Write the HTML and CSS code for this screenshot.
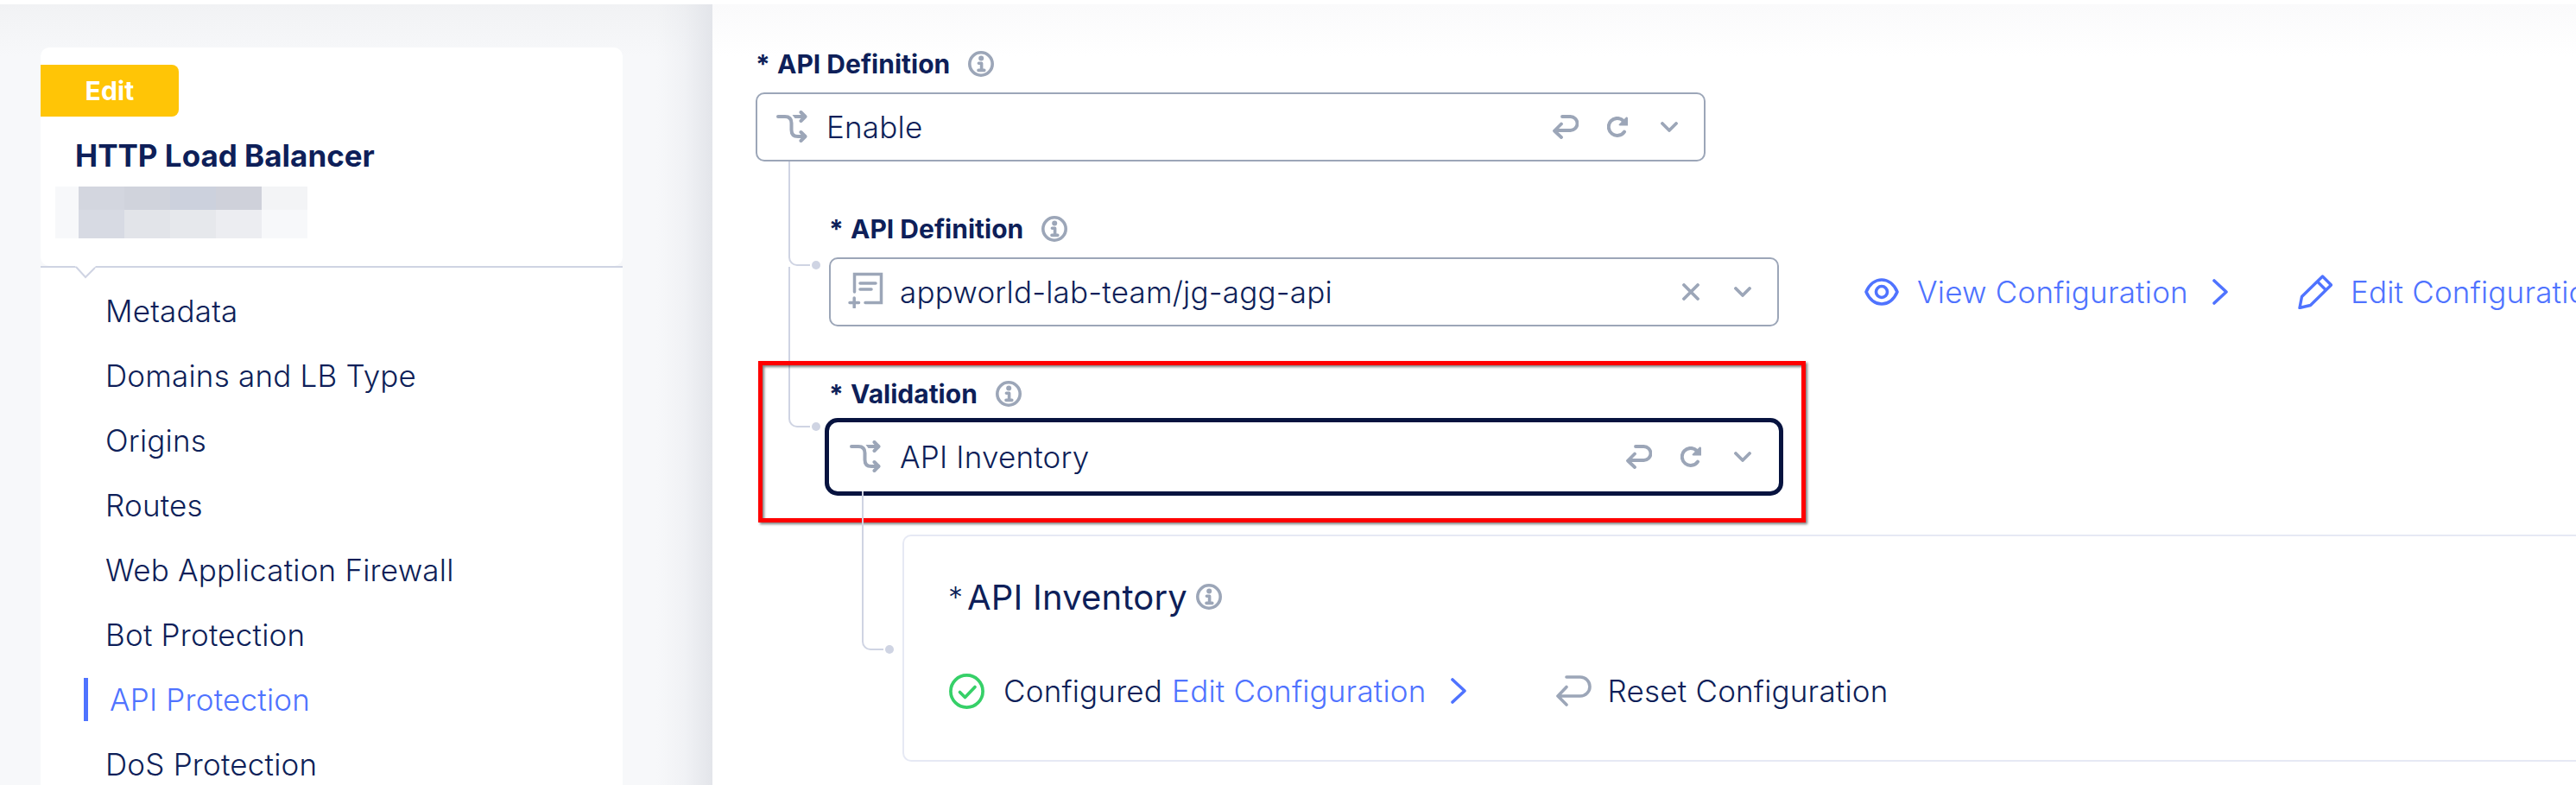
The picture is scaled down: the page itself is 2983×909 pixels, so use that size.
FILE: index.html
```html
<!DOCTYPE html>
<html lang="en">
<head>
<meta charset="utf-8">
<title>HTTP Load Balancer</title>
<link rel="stylesheet" href="styles.css">
</head>
<body>
<svg class="defs" width="0" height="0" aria-hidden="true">
  <symbol id="info" viewBox="0 0 30 30"><circle cx="15" cy="15" r="13.2" fill="none" stroke="currentColor" stroke-width="3.600"/><circle cx="15.2" cy="8.6" r="3" fill="currentColor"/><path d="M12.4 14.200h3.2v8M12 22.400h6.800" fill="none" stroke="currentColor" stroke-width="3.600" stroke-linecap="round" stroke-linejoin="round"/></symbol>
  <symbol id="split" viewBox="0 0 36 38"><g fill="none" stroke="currentColor" stroke-width="4" stroke-linecap="round" stroke-linejoin="round"><path d="M2 7h8c5 0 7.500 2.500 7.500 7.500v8c0 5 2.500 7.500 7.500 7.500h8"/><path d="M28.500 2L33.500 7l-5 5M28.500 25l5 5-5 5"/></g><path d="M18.500 5H33v4H21.500z" fill="currentColor"/></symbol>
  <symbol id="form" viewBox="0 0 42 42"><g fill="none" stroke="currentColor" stroke-width="3.500" stroke-linecap="round"><path d="M7.500 23V2.500h31v33H20" stroke-linejoin="miter"/><path d="M14 13h18M14 20h13"/><path d="M2 35.500h10.500M7.200 30v11"/></g></symbol>
  <symbol id="reset" viewBox="0 0 30 28"><path d="M11 2h9.500a7.900 7.900 0 0 1 0 16H3M10 10.500L2 18.500 10 26" fill="none" stroke="currentColor" stroke-width="3.800" stroke-linecap="round" stroke-linejoin="round"/></symbol>
  <symbol id="reset-lg" viewBox="0 0 41 36"><path d="M12 2h16a11 11 0 0 1 0 22H3M12 13.500L2 24l10 10" fill="none" stroke="currentColor" stroke-width="3.600" stroke-linecap="round" stroke-linejoin="round"/></symbol>
  <symbol id="refresh" viewBox="0 0 24 24"><path d="M20 17.600A10 10 0 1 1 19 5" fill="none" stroke="currentColor" stroke-width="4" stroke-linecap="round"/><path d="M22.200 .6Q24 0 24 2v8.500H15Q12.600 10 14.200 8.400z" fill="currentColor"/></symbol>
  <symbol id="chev" viewBox="0 0 20 12"><path d="M2 2l8 8 8-8" fill="none" stroke="currentColor" stroke-width="3.800" stroke-linecap="round" stroke-linejoin="round"/></symbol>
  <symbol id="close" viewBox="0 0 20 20"><path d="M2 2l16 16M18 2L2 18" fill="none" stroke="currentColor" stroke-width="3.800" stroke-linecap="round"/></symbol>
  <symbol id="next" viewBox="0 0 18 30"><path d="M2 2l14 13L2 28" fill="none" stroke="currentColor" stroke-width="3.600" stroke-linecap="round" stroke-linejoin="round"/></symbol>
  <symbol id="eye" viewBox="0 0 40 32"><path d="M2 16C10 -2.600 30 -2.600 38 16C30 34.600 10 34.600 2 16z" fill="none" stroke="currentColor" stroke-width="3.600" stroke-linejoin="round"/><circle cx="20" cy="16" r="6.500" fill="none" stroke="currentColor" stroke-width="3.600"/></symbol>
  <symbol id="pencil" viewBox="0 0 40 40"><g fill="none" stroke="currentColor" stroke-width="3.400" stroke-linejoin="round"><path d="M4.500 25.500L28.500 2 38.500 12 14.500 35.500 2 38.500z"/><path d="M23 8.500L32.500 18"/></g></symbol>
  <symbol id="check" viewBox="0 0 41 41"><g fill="none" stroke="currentColor" stroke-width="3.700" stroke-linecap="round" stroke-linejoin="round"><circle cx="20.500" cy="20.500" r="18.600"/><path d="M12.500 21.500l6 6L30 15.500"/></g></symbol>
</svg>
<aside class="sidebar">
  <section class="card head">
    <span class="badge">Edit</span>
    <h1 class="title">HTTP Load Balancer</h1>
    <div class="redacted"><i></i><i></i><i></i><i></i><i></i><i></i><i></i><i></i><i></i><i></i><i></i><i></i></div>
    <svg class="notch" viewBox="0 0 24 16"><path d="M0 0h24L12 13z" fill="#fff"/><path d="M1 1l11 12L23 2" fill="none" stroke="#cfd4e3" stroke-width="2"/></svg>
  </section>
  <nav class="card menu">
    <a>Metadata</a>
    <a>Domains and LB Type</a>
    <a>Origins</a>
    <a>Routes</a>
    <a>Web Application Firewall</a>
    <a>Bot Protection</a>
    <a class="active">API Protection</a>
    <a>DoS Protection</a>
  </nav>
</aside>
<main class="main">
  <div class="field">
    <div class="label"><span class="star">*</span><span>API Definition</span><svg class="info"><use href="#info"/></svg></div>
    <div class="select"><svg class="kind"><use href="#split"/></svg><span class="value">Enable</span><svg class="i-reset"><use href="#reset"/></svg><svg class="i-refresh"><use href="#refresh"/></svg><svg class="i-chev"><use href="#chev"/></svg></div>
  </div>
  <div class="children">
    <div class="field">
      <span class="branch first"></span>
      <div class="label"><span class="star">*</span><span>API Definition</span><svg class="info"><use href="#info"/></svg></div>
      <div class="row">
        <div class="select"><svg class="form"><use href="#form"/></svg><span class="value">appworld-lab-team/jg-agg-api</span><svg class="i-close"><use href="#close"/></svg><svg class="i-chev"><use href="#chev"/></svg></div>
        <a class="link view"><svg class="i-eye"><use href="#eye"/></svg><span>View Configuration</span><svg class="i-next"><use href="#next"/></svg></a>
        <a class="link edit"><svg class="i-pencil"><use href="#pencil"/></svg><span>Edit Configuration</span></a>
      </div>
    </div>
    <div class="field">
      <span class="branch second"></span>
      <span class="highlight"></span>
      <div class="label"><span class="star">*</span><span>Validation</span><svg class="info"><use href="#info"/></svg></div>
      <div class="select focused"><svg class="kind"><use href="#split"/></svg><span class="value">API Inventory</span><svg class="i-reset"><use href="#reset"/></svg><svg class="i-refresh"><use href="#refresh"/></svg><svg class="i-chev"><use href="#chev"/></svg></div>
    </div>
    <div class="panel">
      <span class="branch third"></span>
      <div class="panel-title"><span class="star">*</span><span>API Inventory</span><svg class="info"><use href="#info"/></svg></div>
      <div class="panel-row">
        <svg class="i-check"><use href="#check"/></svg><span class="state">Configured</span><a class="link"><span>Edit Configuration</span><svg class="i-next"><use href="#next"/></svg></a>
        <svg class="i-reset-lg"><use href="#reset-lg"/></svg><span class="reset">Reset Configuration</span>
      </div>
    </div>
  </div>
</main>
</body>
</html>
```
FILE: styles.css
```css
* { box-sizing: border-box; }
body {
  margin: 0;
  height: 909px;
  display: flex;
  overflow: hidden;
  background: #fff;
  border-top: 5px solid #fff;
  font-family: Inter, "Liberation Sans", sans-serif;
  font-size: 35px;
  font-weight: 340;
  letter-spacing: .2px;
  color: #0e1f59;
  white-space: nowrap;
}
svg { flex: none; display: block; }
.defs { position: absolute; }

/* Sidebar */
.sidebar {
  flex: none;
  width: 825px;
  height: 904px;
  padding: 50px 104px 0 47px;
  background:
    linear-gradient(to right, rgba(225,227,233,0) 0, rgba(226,228,234,.3) 50%, #e3e5ea 100%) right / 65px 100% no-repeat,
    linear-gradient(#f1f2f4, #f7f8fa 60px);
}
.card { background: #fff; border-radius: 10px; }
.head {
  position: relative;
  height: 253px;
  padding-top: 20px;
}
.badge {
  display: block;
  width: 160px;
  height: 60px;
  line-height: 60px;
  text-align: center;
  border-radius: 0 8px 8px 0;
  background: #ffc506;
  color: #fff;
  font-size: 30px;
  font-weight: 650;
}
.title {
  margin: 23px 0 0 40px;
  font-size: 35px;
  line-height: 44px;
  font-weight: 650;
  letter-spacing: 0;
}
.redacted {
  width: 292px;
  margin: 14px 0 0 17px;
  display: grid;
  grid-template-columns: 27px repeat(5, 53px);
  grid-template-rows: 27px 33px;
}
.redacted i { background: #f7f8fa; }
.redacted i:nth-child(2) { background: #d3d6df; }
.redacted i:nth-child(3) { background: #d0d3dc; }
.redacted i:nth-child(4) { background: #ccd1dd; }
.redacted i:nth-child(5) { background: #cfd1da; }
.redacted i:nth-child(6) { background: #f3f4f6; }
.redacted i:nth-child(8) { background: #d7dae3; }
.redacted i:nth-child(9) { background: #e2e4e9; }
.redacted i:nth-child(10) { background: #e6e8ec; }
.redacted i:nth-child(11) { background: #ecedf1; }
.notch {
  position: absolute;
  z-index: 1;
  left: 40px;
  top: 253px;
  width: 24px;
  height: 16px;
}
.menu {
  height: 610px;
  padding-top: 12px;
  border-radius: 0;
  border-top: 2px solid #cfd4e3;
}
.menu a {
  display: flex;
  align-items: center;
  height: 75px;
  padding-left: 75px;
}
.menu .active { color: #4f73ff; padding-left: 50px; }
.menu .active::before {
  content: "";
  width: 5px;
  height: 50px;
  margin-right: 25px;
  background: #4f73ff;
}

/* Form */
.main {
  flex: 1;
  min-width: 0;
  height: 904px;
  padding: 51px 0 0 50px;
  background: linear-gradient(#fafafb, #fff 60px);
}
.field { position: relative; }
.label {
  display: flex;
  align-items: center;
  height: 36px;
  margin-bottom: 15px;
  font-size: 30px;
  font-weight: 650;
  letter-spacing: 0;
}
.label .star { width: 25px; }
.info { width: 30px; height: 30px; color: #9ca6b8; }
.label .info { margin-left: 21px; }
.select {
  display: flex;
  flex: none;
  align-items: center;
  width: 1100px;
  height: 80px;
  padding: 0 30px 0 22px;
  border: 2px solid #9ca6b8;
  border-radius: 10px;
  background: #fff;
}
.select svg { color: #9ca6b8; }
.focused { border-color: #fff; box-shadow: 0 0 0 5px #07133f; }
.kind { width: 36px; height: 38px; margin-right: 22px; }
.form { width: 42px; height: 42px; margin: -4px 18px 0 -2px; }
.value { flex: 1; }
.i-reset { width: 30px; height: 28px; margin-right: 33px; }
.i-refresh { width: 24px; height: 24px; margin-right: 38px; }
.i-close { width: 20px; height: 20px; margin-right: 40px; }
.i-chev { width: 20px; height: 12px; }
.children {
  display: flex;
  flex-direction: column;
  gap: 60px;
  margin-top: 60px;
  padding-left: 85px;
}
.row { display: flex; align-items: center; }
.link { display: flex; flex: none; align-items: center; color: #4f73ff; }
.view { margin: -1px 0 0 99px; }
.i-eye { width: 40px; height: 32px; margin-right: 21px; }
.i-next { width: 18px; height: 30px; margin-left: 28px; }
.edit { margin: -1px 0 0 81px; }
.i-pencil { width: 40px; height: 40px; margin-right: 21px; }

/* Tree connectors */
.branch {
  position: absolute;
  width: 25px;
  border: solid #cfd4e3;
  border-width: 0 0 2px 2px;
  border-bottom-left-radius: 10px;
}
.branch::after {
  content: "";
  position: absolute;
  right: -12px;
  bottom: -6px;
  width: 10px;
  height: 10px;
  border-radius: 50%;
  background: #cfd4e3;
}
.first { left: -47px; top: -60px; height: 121px; }
.second { left: -47px; top: -129px; height: 186px; }
.third { left: -49px; top: -52px; height: 184px; }

/* Annotation frame */
.highlight {
  position: absolute;
  left: -82px;
  top: -20px;
  width: 1213px;
  height: 187px;
  border: 5px solid #f00;
  filter: drop-shadow(2px 2px 1.5px rgba(0,0,0,.5));
}

/* Panel */
.panel {
  position: relative;
  height: 263px;
  margin: -10px 0 0 85px;
  padding: 46px 0 0 52px;
  border: 2px solid #e6e9f4;
  border-right: 0;
  border-radius: 10px 0 0 10px;
}
.panel-title {
  display: flex;
  align-items: center;
  height: 48px;
  font-size: 40px;
  font-weight: 430;
}
.panel-title .star { width: 22px; margin-left: -1px; font-size: 34px; font-weight: 300; }
.panel-title .info { margin-left: 10px; }
.panel-row { display: flex; align-items: center; height: 44px; margin-top: 63px; }
.i-check { width: 41px; height: 41px; color: #36d068; margin-right: 22px; }
.state { margin-right: 11px; }
.i-reset-lg { width: 41px; height: 36px; color: #9ca6b8; margin: 0 19px 0 104px; }
```
